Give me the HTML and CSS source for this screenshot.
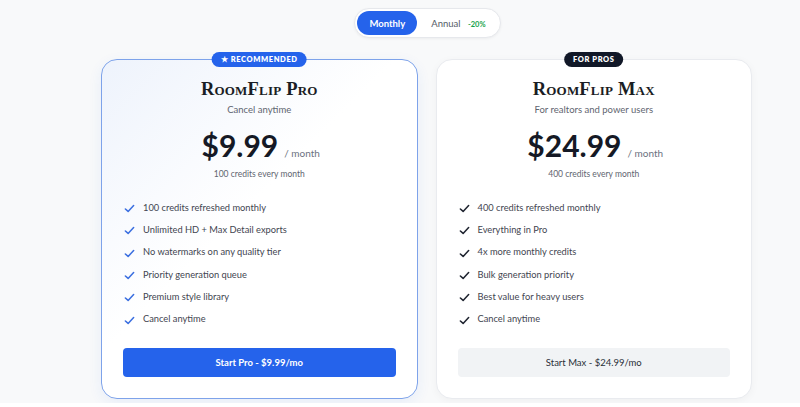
FILE: index.html
```html
<!DOCTYPE html>
<html lang="en">
<head>
<meta charset="utf-8">
<title>RoomFlip Pricing</title>
<link rel="stylesheet" href="styles.css">
</head>
<body>
<main class="page">
  <div class="toggle-row">
    <div class="toggle">
      <button class="toggle-btn active">Monthly</button>
      <button class="toggle-btn">Annual <span class="save">-20%</span></button>
    </div>
  </div>
  <div class="plans">
    <section class="card card-pro">
      <span class="badge badge-blue">&#9733; RECOMMENDED</span>
      <h2 class="plan-name">RoomFlip Pro</h2>
      <p class="plan-sub">Cancel anytime</p>
      <div class="price-row"><span class="price">$9.99</span><span class="per">/ month</span></div>
      <p class="credits">100 credits every month</p>
      <ul class="features blue">
        <li><svg viewBox="0 0 12 12"><path d="M1.5 6.5 L4.5 9.2 L10.5 2.8"/></svg>100 credits refreshed monthly</li>
        <li><svg viewBox="0 0 12 12"><path d="M1.5 6.5 L4.5 9.2 L10.5 2.8"/></svg>Unlimited HD + Max Detail exports</li>
        <li><svg viewBox="0 0 12 12"><path d="M1.5 6.5 L4.5 9.2 L10.5 2.8"/></svg>No watermarks on any quality tier</li>
        <li><svg viewBox="0 0 12 12"><path d="M1.5 6.5 L4.5 9.2 L10.5 2.8"/></svg>Priority generation queue</li>
        <li><svg viewBox="0 0 12 12"><path d="M1.5 6.5 L4.5 9.2 L10.5 2.8"/></svg>Premium style library</li>
        <li><svg viewBox="0 0 12 12"><path d="M1.5 6.5 L4.5 9.2 L10.5 2.8"/></svg>Cancel anytime</li>
      </ul>
      <button class="cta cta-primary">Start Pro - $9.99/mo</button>
    </section>
    <section class="card card-max">
      <span class="badge badge-dark">FOR PROS</span>
      <h2 class="plan-name">RoomFlip Max</h2>
      <p class="plan-sub">For realtors and power users</p>
      <div class="price-row"><span class="price">$24.99</span><span class="per">/ month</span></div>
      <p class="credits">400 credits every month</p>
      <ul class="features dark">
        <li><svg viewBox="0 0 12 12"><path d="M1.5 6.5 L4.5 9.2 L10.5 2.8"/></svg>400 credits refreshed monthly</li>
        <li><svg viewBox="0 0 12 12"><path d="M1.5 6.5 L4.5 9.2 L10.5 2.8"/></svg>Everything in Pro</li>
        <li><svg viewBox="0 0 12 12"><path d="M1.5 6.5 L4.5 9.2 L10.5 2.8"/></svg>4x more monthly credits</li>
        <li><svg viewBox="0 0 12 12"><path d="M1.5 6.5 L4.5 9.2 L10.5 2.8"/></svg>Bulk generation priority</li>
        <li><svg viewBox="0 0 12 12"><path d="M1.5 6.5 L4.5 9.2 L10.5 2.8"/></svg>Best value for heavy users</li>
        <li><svg viewBox="0 0 12 12"><path d="M1.5 6.5 L4.5 9.2 L10.5 2.8"/></svg>Cancel anytime</li>
      </ul>
      <button class="cta cta-light">Start Max - $24.99/mo</button>
    </section>
  </div>
</main>
</body>
</html>
```
FILE: styles.css
```css
* { box-sizing: border-box; }
html, body { margin: 0; padding: 0; }
body {
  background: #ffffff;
  font-family: Lato, "Noto Sans", sans-serif;
  color: #1f2430;
}
.page {
  background: #f8f9fa;
  height: 403px;
  padding-top: 8px;
  overflow: hidden;
}
.toggle-row {
  display: flex;
  justify-content: center;
  padding-left: 55px;
}
.toggle {
  display: flex;
  align-items: center;
  gap: 2px;
  background: #ffffff;
  border: 1px solid #e6e8ec;
  border-radius: 15px;
  padding: 2px;
  height: 30px;
  box-shadow: 0 1px 3px rgba(0,0,0,0.05);
}
.toggle-btn {
  font-family: inherit;
  border: none;
  background: transparent;
  height: 24px;
  border-radius: 12px;
  font-size: 9.5px;
  color: #555b66;
  padding: 0 12px;
  cursor: pointer;
}
.toggle-btn.active {
  background: #2563eb;
  color: #ffffff;
  font-weight: 700;
}
.save {
  color: #16a34a;
  font-size: 7.5px;
  font-weight: 700;
  margin-left: 5px;
}
.plans {
  display: flex;
  gap: 18px;
  margin: 21px 0 0 101px;
  width: 651px;
}
.card {
  position: relative;
  flex: 1;
  height: 340px;
  border-radius: 16px;
  background: #ffffff;
  border: 1px solid #e9ebef;
  padding: 17px 21px 0;
  display: flex;
  flex-direction: column;
  align-items: center;
}
.card-pro {
  border-color: #7ea3ea;
  background: linear-gradient(135deg, #eef3fc 0%, #ffffff 45%);
  box-shadow: 0 4px 14px rgba(37, 99, 235, 0.08);
}
.card-max {
  box-shadow: 0 2px 8px rgba(0,0,0,0.04);
}
.badge {
  position: absolute;
  top: -8px;
  left: 50%;
  transform: translateX(-50%);
  height: 15px;
  line-height: 15px;
  border-radius: 8px;
  font-size: 7.5px;
  font-weight: 800;
  letter-spacing: 0.6px;
  color: #ffffff;
  padding: 0 9px;
  white-space: nowrap;
}
.badge-blue { background: #2563eb; }
.badge-dark { background: #111827; }
.plan-name {
  margin: 0;
  font-family: "Liberation Serif", serif;
  font-variant: small-caps;
  font-weight: 700;
  font-size: 18.5px;
  letter-spacing: 0.2px;
  color: #1a1d24;
  line-height: 24px;
}
.plan-sub {
  margin: 3px 0 0;
  font-size: 9.5px;
  color: #5f6570;
  line-height: 12px;
}
.price-row {
  display: flex;
  align-items: baseline;
  gap: 6px;
  margin-top: 10px;
  padding-left: 3px;
}
.price {
  font-size: 30px;
  font-weight: 700;
  color: #151925;
  line-height: 38px;
}
.per {
  font-size: 10px;
  color: #6b7280;
}
.credits {
  margin: 4px 0 0;
  font-size: 8.5px;
  color: #5f6570;
  line-height: 12px;
}
.features {
  list-style: none;
  margin: 16px 0 0;
  padding: 0;
  width: 100%;
}
.features li {
  display: flex;
  align-items: center;
  gap: 8px;
  height: 22.3px;
  font-size: 9.3px;
  color: #3f4550;
  padding-left: 1px;
}
.features svg {
  width: 11px;
  height: 11px;
  fill: none;
  stroke-width: 1.7;
  stroke-linecap: round;
  stroke-linejoin: round;
  margin-top: 3px;
}
.features.blue svg { stroke: #3b6fe0; }
.features.dark svg { stroke: #1f2430; }
.cta {
  margin-top: 18px;
  width: 100%;
  height: 29px;
  flex-shrink: 0;
  border: none;
  border-radius: 4px;
  font-family: inherit;
  font-size: 9.5px;
}
.cta-primary {
  background: #2563eb;
  color: #ffffff;
  font-weight: 700;
}
.cta-light {
  background: #f1f3f5;
  color: #2a2f38;
}
```
